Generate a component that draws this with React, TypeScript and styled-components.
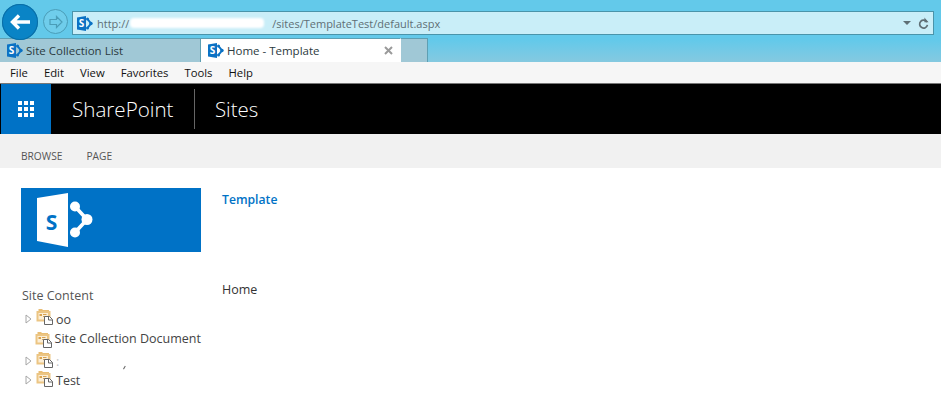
import React from 'react';
import styled, { createGlobalStyle } from 'styled-components';

const GlobalStyle = createGlobalStyle`
  html, body {
    margin: 0;
    padding: 0;
    background: #fff;
  }
`;

const Page = styled.div`
  width: 941px;
  height: 416px;
  overflow: hidden;
  font-family: 'Open Sans', 'Noto Sans', sans-serif;
  background: #fff;
`;

const Chrome = styled.div`
  height: 62px;
  background: linear-gradient(#63c9ea 0, #63c9ea 40px, #85c9e0 62px);
`;

const Toolbar = styled.div`
  height: 38px;
  display: flex;
  align-items: flex-start;
  padding: 4px 7px 0 2px;
  box-sizing: border-box;
`;

const BackButton = styled.div`
  width: 36px;
  height: 36px;
  border-radius: 50%;
  background: #0a84c6;
  box-shadow: inset 0 0 0 1px #0a6ea6;
  display: flex;
  align-items: center;
  justify-content: center;
  flex: none;
  position: relative;
  z-index: 1;
`;

const ForwardButton = styled.div`
  width: 23px;
  height: 23px;
  margin: 5px 0 0 5px;
  border: 1px solid #4a9db8;
  border-radius: 50%;
  background: #6fcdeb;
  display: flex;
  align-items: center;
  justify-content: center;
  flex: none;
`;

const AddressBar = styled.div`
  flex: 1;
  height: 24px;
  margin: 7px 0 0 4px;
  box-sizing: border-box;
  border: 1px solid #4a94aa;
  background: #c9eef8;
  display: flex;
  align-items: center;
  padding: 0 4px 0 3px;
  gap: 7px;
`;

const Url = styled.div`
  flex: 1;
  margin-left: -3px;
  font-size: 11px;
  color: #5f6f75;
  white-space: nowrap;
  display: flex;
  align-items: center;
`;

const Redaction = styled.span`
  display: inline-block;
  width: 134px;
  height: 10px;
  margin-right: 8px;
  margin-left: 1px;
  background: #fff;
  border-radius: 4px;
  filter: blur(1px);
`;

const Caret = styled.span`
  width: 0;
  height: 0;
  border-left: 4px solid transparent;
  border-right: 4px solid transparent;
  border-top: 4px solid #5f6f75;
`;

const TabStrip = styled.div`
  height: 24px;
  display: flex;
  align-items: stretch;
`;

const Tab = styled.div<{ $active?: boolean; $w: number }>`
  width: ${p => p.$w}px;
  box-sizing: border-box;
  background: ${p => (p.$active ? '#fff' : '#a0c8d6')};
  border-top: 1px solid #5e9fb3;
  border-right: 1px solid ${p => (p.$active ? '#fff' : '#5e9fb3')};
  display: flex;
  align-items: center;
  gap: 3px;
  padding: 0 7px 0 6px;
  font-size: 11.5px;
  color: #2b3a40;
  white-space: nowrap;
`;

const TabTitle = styled.span`
  flex: 1;
`;

const MenuBar = styled.div`
  height: 21px;
  background: #f6f6f6;
  display: flex;
  align-items: center;
  padding-left: 10px;
  gap: 16px;
  font-size: 11.3px;
  color: #111;
  border-bottom: 1px solid #777;
`;

const SuiteBar = styled.div`
  height: 50px;
  background: #000;
  display: flex;
  align-items: center;
  padding-left: 1px;
  color: #fff;
  font-weight: 300;
`;

const AppTile = styled.div`
  width: 50px;
  height: 50px;
  background: #0072c6;
  display: grid;
  grid-template-columns: repeat(3, 4px);
  grid-auto-rows: 4px;
  gap: 2px;
  align-content: center;
  justify-content: center;
  flex: none;
`;

const TileDot = styled.span`
  background: #fff;
`;

const Brand = styled.div`
  margin-left: 21px;
  font-size: 20.6px;
  width: 122px;
  height: 40px;
  line-height: 40px;
  border-right: 1px solid #666;
`;

const SuiteTitle = styled.div`
  margin-left: 20px;
  font-size: 20.4px;
`;

const Ribbon = styled.div`
  height: 34px;
  background: #f1f1f1;
  display: flex;
  align-items: flex-end;
  padding: 0 0 5px 21px;
  box-sizing: border-box;
  gap: 24px;
  font-size: 10.2px;
  color: #555;
`;

const Content = styled.div`
  display: grid;
  grid-template-columns: 201px 1fr;
  column-gap: 21px;
  padding: 20px 0 0 0;
`;

const SideColumn = styled.div`
  padding-left: 21px;
`;

const LogoBox = styled.div`
  width: 180px;
  height: 64px;
  background: #0072c6;
  display: flex;
`;

const NavHeading = styled.div`
  margin: 35px 0 0 1px;
  font-size: 12.5px;
  line-height: 18px;
  color: #555;
`;

const Tree = styled.div`
  margin-top: 5px;
`;

const TreeRow = styled.div<{ $top: number }>`
  display: flex;
  align-items: center;
  height: 18px;
  margin-top: ${p => p.$top}px;
  font-size: 12.5px;
  color: #444;
  white-space: nowrap;
`;

const Arrow = styled.span<{ $hidden?: boolean }>`
  width: 14px;
  display: flex;
  justify-content: center;
  visibility: ${p => (p.$hidden ? 'hidden' : 'visible')};
`;

const FolderSlot = styled.span<{ $shift: number }>`
  align-self: flex-start;
  display: flex;
  margin: ${p => p.$shift}px 3px 0 1px;
`;

const FaintMark = styled.span`
  color: #c4c4c4;
`;

const Tick = styled.span`
  width: 3px;
  height: 3px;
  margin: 11px 0 0 62px;
  border-right: 1px solid #666;
  border-bottom: 1px solid transparent;
  transform: rotate(30deg);
`;

const MainColumn = styled.div`
  padding-top: 3px;
`;

const SiteTitle = styled.div`
  font-size: 12.2px;
  font-weight: 600;
  line-height: 17px;
  color: #0072c6;
`;

const HomeLink = styled.div`
  margin-top: 73px;
  font-size: 12.5px;
  line-height: 18px;
  color: #333;
`;

const SpIcon = () => (
  <svg width="17" height="17" viewBox="0 0 17 17" style={{ flex: 'none' }}>
    <path d="M1 2.500 10 1v15l-9-1.500z" fill="#0b72c4" />
    <text x="5.400" y="12" fontSize="10" fontWeight="700" fill="#fff" textAnchor="middle" fontFamily="Open Sans">S</text>
    <path d="M11.500 4l3.500 4.500-3.500 4.500" fill="none" stroke="#0b72c4" strokeWidth="2" />
    <circle cx="11.500" cy="3.900" r="1.500" fill="#0b72c4" />
    <circle cx="15" cy="8.500" r="1.700" fill="#0b72c4" />
    <circle cx="11.500" cy="13.100" r="1.500" fill="#0b72c4" />
  </svg>
);

const BigLogo = () => (
  <svg width="80" height="64" viewBox="0 0 80 64">
    <path d="M16 10 47 5v54l-31-6z" fill="#fff" />
    <text x="30.500" y="42" fontSize="21" fontWeight="700" fill="#0072c6" textAnchor="middle" fontFamily="Open Sans">S</text>
    <path d="M54 18.500 66 31.500 54 44.500" fill="none" stroke="#fff" strokeWidth="3.600" />
    <circle cx="54" cy="18.500" r="5" fill="#fff" />
    <circle cx="66" cy="31.500" r="5.500" fill="#fff" />
    <circle cx="54" cy="44.500" r="5" fill="#fff" />
  </svg>
);

const FolderIcon = () => (
  <svg width="17" height="17" viewBox="0 0 17 17" style={{ flex: 'none' }}>
    <path d="M2.500 1h3.500l1 1h6v2h-10.500z" fill="#e9bd74" />
    <rect x="0.500" y="3" width="14" height="10.500" fill="#ecc583" />
    <rect x="2.500" y="5" width="9.500" height="6.500" fill="#fbeed6" />
    <rect x="3.500" y="6" width="2.500" height="2" fill="#d9a24e" />
    <rect x="7" y="6" width="3.500" height="1" fill="#d9a24e" />
    <rect x="7" y="8" width="3.500" height="1" fill="#d9a24e" />
    <path d="M8.500 8.500h5l3 3v5h-8z" fill="#fff" stroke="#666" />
    <path d="M12.500 8.500v3.500h4" fill="none" stroke="#666" />
  </svg>
);

const ExpandArrow = () => (
  <svg width="7" height="10" viewBox="0 0 7 10">
    <path d="M1 1l5 4-5 4z" fill="#fff" stroke="#a6a6a6" />
  </svg>
);

export default function App() {
  return (
    <Page>
      <GlobalStyle />
      <Chrome>
        <Toolbar>
          <BackButton>
            <svg width="21" height="16" viewBox="0 0 21 16">
              <path d="M9 1.500 2.500 8 9 14.500M3 8h17" fill="none" stroke="#fff" strokeWidth="3.400" />
            </svg>
          </BackButton>
          <ForwardButton>
            <svg width="16" height="14" viewBox="0 0 16 14">
              <path d="M8.500 1.500 14 7l-5.500 5.500V9.500H2v-5h6.500z" fill="none" stroke="#4a9db8" strokeWidth="1.200" />
            </svg>
          </ForwardButton>
          <AddressBar>
            <SpIcon />
            <Url>
              http://
              <Redaction />
              /sites/TemplateTest/default.aspx
            </Url>
            <Caret />
            <svg width="11" height="13" viewBox="0 0 12 13">
              <path d="M9.800 5A4.300 4.300 0 1 0 10.300 8" fill="none" stroke="#5f6f75" strokeWidth="1.800" />
              <path d="M7 0v5h4.500z" fill="#5f6f75" />
            </svg>
          </AddressBar>
        </Toolbar>
        <TabStrip>
          <Tab $w={201}>
            <SpIcon />
            <TabTitle>Site Collection List</TabTitle>
          </Tab>
          <Tab $w={200} $active>
            <SpIcon />
            <TabTitle>Home - Template</TabTitle>
            <svg width="9" height="9" viewBox="0 0 9 9">
              <path d="M1 1l7 7M8 1 1 8" stroke="#9a9a9a" strokeWidth="2" />
            </svg>
          </Tab>
          <Tab $w={27} />
        </TabStrip>
      </Chrome>
      <MenuBar>
        <span>File</span>
        <span>Edit</span>
        <span>View</span>
        <span>Favorites</span>
        <span>Tools</span>
        <span>Help</span>
      </MenuBar>
      <SuiteBar>
        <AppTile>
          {Array.from({ length: 9 }).map((_, i) => (
            <TileDot key={i} />
          ))}
        </AppTile>
        <Brand>SharePoint</Brand>
        <SuiteTitle>Sites</SuiteTitle>
      </SuiteBar>
      <Ribbon>
        <span>BROWSE</span>
        <span>PAGE</span>
      </Ribbon>
      <Content>
        <SideColumn>
          <LogoBox>
            <BigLogo />
          </LogoBox>
          <NavHeading>Site Content</NavHeading>
          <Tree>
            <TreeRow $top={0}>
              <Arrow>
                <ExpandArrow />
              </Arrow>
              <FolderSlot $shift={-2}>
                <FolderIcon />
              </FolderSlot>
              oo
            </TreeRow>
            <TreeRow $top={1}>
              <Arrow $hidden>
                <ExpandArrow />
              </Arrow>
              <FolderSlot $shift={2}>
                <FolderIcon />
              </FolderSlot>
              Site Collection Document
            </TreeRow>
            <TreeRow $top={5}>
              <Arrow>
                <ExpandArrow />
              </Arrow>
              <FolderSlot $shift={-1}>
                <FolderIcon />
              </FolderSlot>
              <FaintMark>:</FaintMark>
              <Tick />
            </TreeRow>
            <TreeRow $top={1}>
              <Arrow>
                <ExpandArrow />
              </Arrow>
              <FolderSlot $shift={-1}>
                <FolderIcon />
              </FolderSlot>
              Test
            </TreeRow>
          </Tree>
        </SideColumn>
        <MainColumn>
          <SiteTitle>Template</SiteTitle>
          <HomeLink>Home</HomeLink>
        </MainColumn>
      </Content>
    </Page>
  );
}
